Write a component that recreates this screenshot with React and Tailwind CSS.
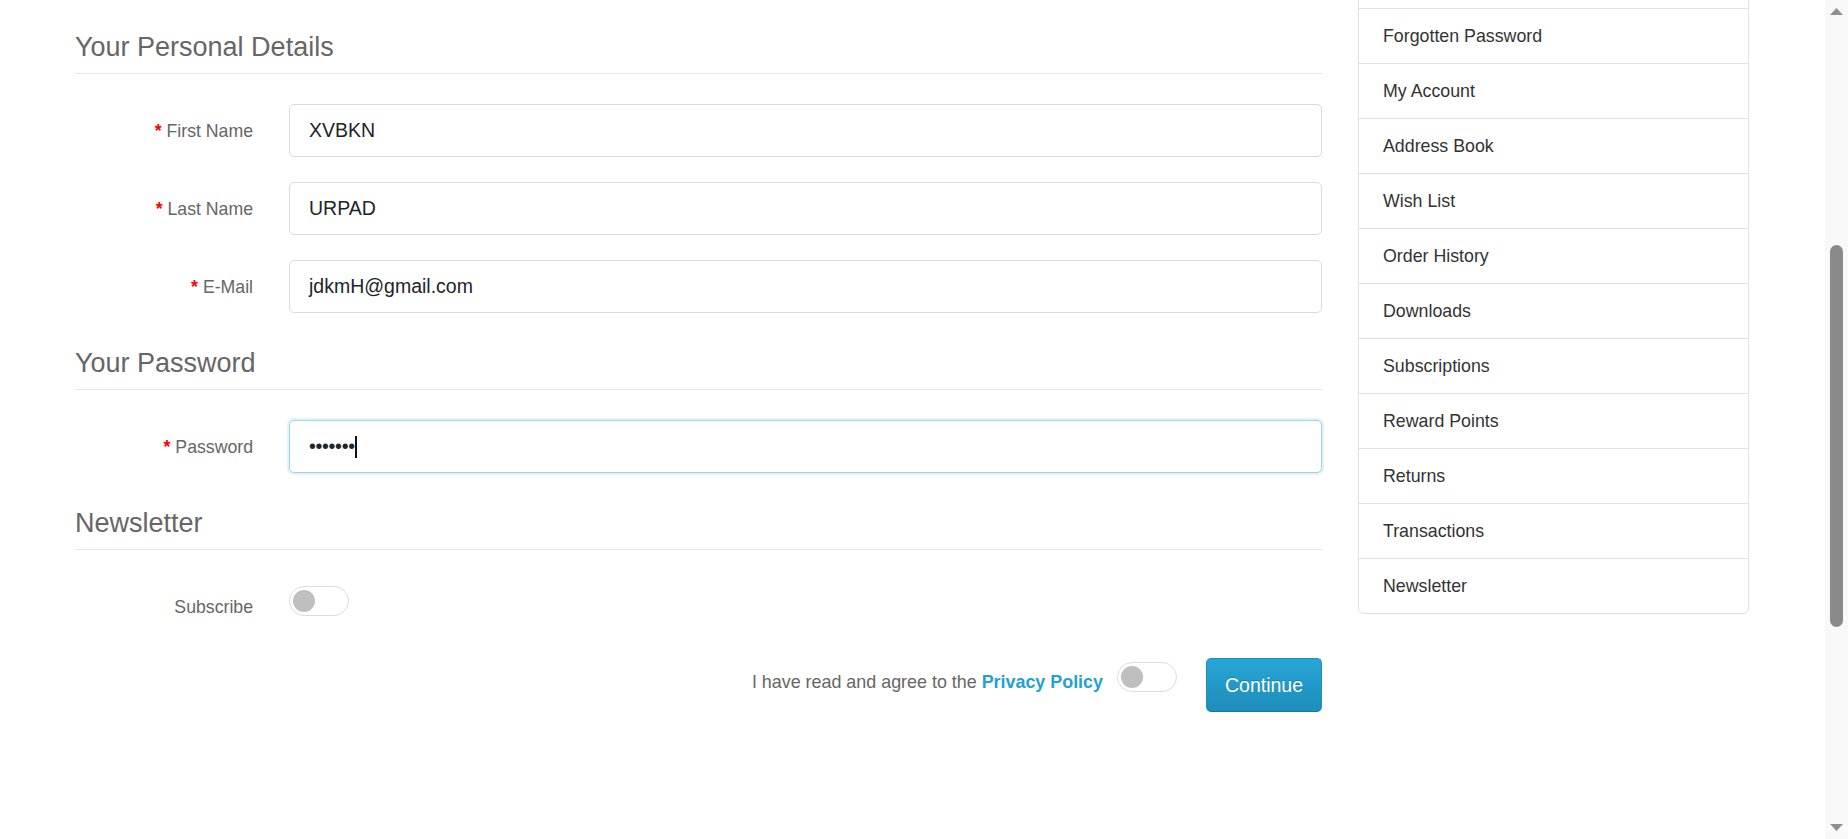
import React from "react";

const menu = [
  "",
  "Forgotten Password",
  "My Account",
  "Address Book",
  "Wish List",
  "Order History",
  "Downloads",
  "Subscriptions",
  "Reward Points",
  "Returns",
  "Transactions",
  "Newsletter",
];

const Legend = ({ children }) => (
  <div className="text-[27px] leading-[32px] text-[#666] pb-[10px] border-b border-[#e5e5e5]">
    {children}
  </div>
);

const Label = ({ children, required }) => (
  <div className="w-[178px] shrink-0 text-right text-[17.7px] leading-[24px] text-[#666]">
    {required && <span className="text-[#f00] font-bold">* </span>}
    {children}
  </div>
);

const Toggle = () => (
  <div className="w-[60px] h-[30px] rounded-full border border-[#dcdcdc] bg-white flex items-center pl-[3px]">
    <div className="w-[22px] h-[22px] rounded-full bg-[#bfbfbf]" />
  </div>
);

const Field = ({ label, value }) => (
  <div className="flex items-center h-[53px]">
    <Label required>{label}</Label>
    <div className="ml-[36px] flex-1 h-full rounded-[5px] border border-[#dadada] bg-white flex items-center pl-[19px] text-[19.5px] text-[#212529]">
      {value}
    </div>
  </div>
);

const App = () => {
  return (
    <div className="flex h-[839px] overflow-hidden bg-white font-['Liberation_Sans',Arial,sans-serif]">
      <div className="flex-1 flex pl-[75px] gap-[36px]">
        {/* form */}
        <div className="w-[1247px] pt-[31px]">
          <Legend>Your Personal Details</Legend>
          <div className="mt-[30px] flex flex-col gap-[25px]">
            <Field label="First Name" value="XVBKN" />
            <Field label="Last Name" value="URPAD" />
            <Field label="E-Mail" value="jdkmH@gmail.com" />
          </div>

          <div className="mt-[34px]">
            <Legend>Your Password</Legend>
          </div>
          <div className="mt-[30px] flex items-center h-[53px]">
            <Label required>Password</Label>
            <div className="ml-[36px] flex-1 h-full rounded-[5px] border border-[#9fd3e8] shadow-[0_0_0_2px_#e3f2f8] bg-white flex items-center pl-[19px] text-[19.5px] text-[#212529]">
              <span className="tracking-[-0.3px]">•••••••</span>
              <span className="w-[2px] h-[22px] bg-[#111]" />
            </div>
          </div>

          <div className="mt-[34px]">
            <Legend>Newsletter</Legend>
          </div>
          <div className="mt-[30px] flex h-[53px]">
            <div className="self-center">
              <Label>Subscribe</Label>
            </div>
            <div className="ml-[36px] mt-[6px]">
              <Toggle />
            </div>
          </div>

          <div className="mt-[25px] flex justify-end h-[53px]">
            <div className="mt-[11px] text-[17.9px] leading-[26px] text-[#666]">
              I have read and agree to the{" "}
              <a className="font-bold text-[#23a1d1]">Privacy Policy</a>
            </div>
            <div className="ml-[14px] mt-[4px]">
              <Toggle />
            </div>
            <button className="ml-[29px] w-[116px] h-[54px] rounded-[5px] border border-[#1f90bb] border-b-[#167aa0] bg-gradient-to-b from-[#26a6d6] to-[#1e8dba] text-white text-[19.5px] pt-[1px] [text-shadow:0_-1px_0_rgba(0,0,0,0.2)]">
              Continue
            </button>
          </div>
        </div>

        {/* sidebar */}
        <div className="w-[391px]">
          <div className="-mt-[48px] border border-[#dee2e6] rounded-[6px] overflow-hidden">
            {menu.map((item, i) => (
              <div
                key={i}
                className={`h-[55px] flex items-center pl-[24px] text-[17.8px] text-[#333] ${
                  i > 0 ? "border-t border-[#dee2e6]" : ""
                }`}
              >
                {item}
              </div>
            ))}
          </div>
        </div>
      </div>

      {/* scrollbar */}
      <div className="w-[23px] h-full bg-[#f9f9f9] flex flex-col items-center">
        <div className="h-[23px] flex items-center justify-center">
          <svg width="13" height="7" viewBox="0 0 13 7">
            <polygon points="0,7 6.5,0 13,7" fill="#8f8f8f" />
          </svg>
        </div>
        <div className="flex-1 w-full flex justify-center">
          <div className="mt-[222px] w-[13px] h-[382px] rounded-full bg-[#8a8a8a]" />
        </div>
        <div className="h-[23px] flex items-center justify-center">
          <svg width="13" height="7" viewBox="0 0 13 7">
            <polygon points="0,0 6.5,7 13,0" fill="#8f8f8f" />
          </svg>
        </div>
      </div>
    </div>
  );
};

export default App;
